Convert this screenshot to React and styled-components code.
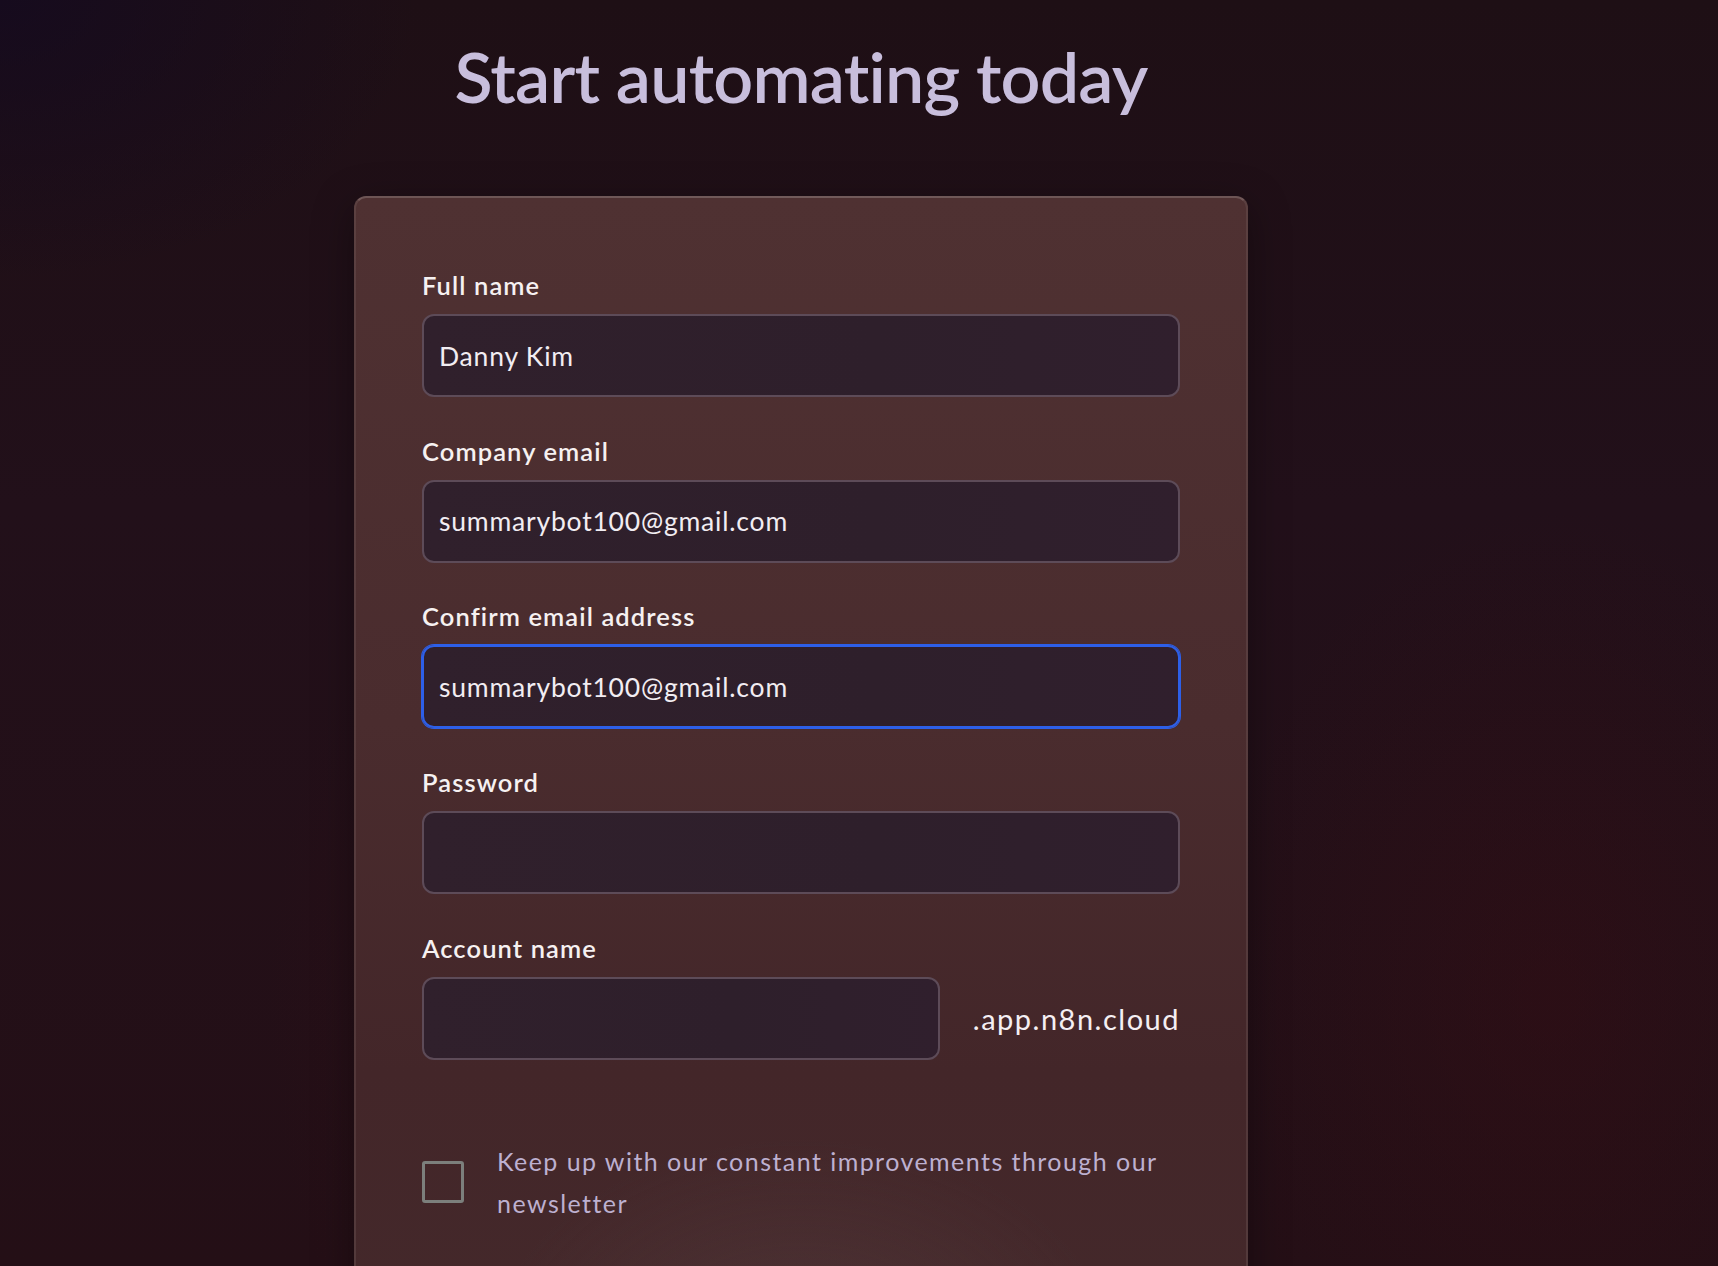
import React from "react";
import styled, { createGlobalStyle } from "styled-components";

const Global = createGlobalStyle`
  html, body { margin: 0; padding: 0; height: 100%; overflow: hidden; }
  body {
    font-family: Lato, "Open Sans", sans-serif;
    background: #1d0f15;
  }
  #root { height: 100%; }
`;

const Page = styled.div`
  min-height: 1266px;
  height: 100%;
  box-sizing: border-box;
  padding-right: 116px;
  display: flex;
  flex-direction: column;
  align-items: center;
  background:
    radial-gradient(ellipse 700px 900px at 760px 1000px, rgba(60, 18, 24, 0.55), rgba(60, 18, 24, 0) 70%),
    radial-gradient(ellipse 500px 700px at 1550px 1000px, rgba(52, 14, 20, 0.5), rgba(52, 14, 20, 0) 70%),
    radial-gradient(ellipse 600px 400px at 0px 0px, rgba(20, 10, 32, 0.8), rgba(20, 10, 32, 0) 70%),
    linear-gradient(180deg, #1e0f15 0%, #22101a 40%, #240f16 100%);
`;

const Title = styled.h1`
  margin: 26px 0 0;
  font-family: Lato, sans-serif;
  font-weight: 600;
  font-size: 70px;
  line-height: 100px;
  letter-spacing: -0.8px;
  color: #c8bedc;
`;

const Card = styled.div`
  margin-top: 70px;
  width: 894px;
  box-sizing: border-box;
  padding: 72px 66px 140px;
  border-radius: 12px;
  border: 2px solid rgba(120, 100, 100, 0.3);
  border-top-color: rgba(150, 130, 128, 0.5);
  background:
    radial-gradient(ellipse 420px 300px at 50% 100%, rgba(90, 66, 68, 0.45), rgba(90, 66, 68, 0) 75%),
    linear-gradient(180deg, #4f3132 0%, #4a2c2e 45%, #432629 75%, #44292b 100%);
  box-shadow: 0 10px 40px rgba(0, 0, 0, 0.35);
  display: flex;
  flex-direction: column;
`;

const Field = styled.div`
  display: flex;
  flex-direction: column;
  margin-bottom: 38.7px;
`;

const Label = styled.label`
  font-family: Lato, sans-serif;
  font-size: 25.5px;
  line-height: 30px;
  font-weight: 600;
  color: #f6f1f1;
  margin-bottom: 14px;
  letter-spacing: 1.1px;
`;

const Input = styled.input`
  box-sizing: border-box;
  width: 100%;
  height: 83px;
  padding: 0 15px;
  border-radius: 12px;
  border: 2px solid ${(p) => (p.$focused ? "#2d5fe8" : "#5d4b58")};
  box-shadow: ${(p) => (p.$focused ? "0 0 0 1px #2d5fe8" : "none")};
  background: linear-gradient(90deg, #30202c 0%, #2e1f2b 60%, #301f2d 100%);
  color: #f2edf2;
  font-family: Lato, sans-serif;
  font-size: 26.5px;
  letter-spacing: 0.8px;
  outline: none;
`;

const AccountRow = styled.div`
  display: flex;
  align-items: center;
  justify-content: space-between;
`;

const AccountInput = styled(Input)`
  width: 518px;
`;

const Suffix = styled.span`
  font-family: Lato, sans-serif;
  font-size: 29px;
  color: #f4eff3;
  letter-spacing: 1.5px;
`;

const CheckRow = styled.div`
  display: flex;
  align-items: center;
  gap: 33px;
  margin-top: 42px;
`;

const Box = styled.span`
  flex: none;
  width: 42px;
  height: 42px;
  box-sizing: border-box;
  border: 3px solid #7c7f7c;
  border-radius: 3px;
`;

const CheckText = styled.span`
  font-family: Lato, sans-serif;
  font-size: 25px;
  line-height: 42px;
  color: #bdb0d0;
  letter-spacing: 1.45px;
`;

export default function App() {
  return (
    <>
      <Global />
      <Page>
        <Title>Start automating today</Title>
        <Card>
          <Field>
            <Label>Full name</Label>
            <Input defaultValue="Danny Kim" />
          </Field>
          <Field>
            <Label>Company email</Label>
            <Input defaultValue="summarybot100@gmail.com" />
          </Field>
          <Field>
            <Label>Confirm email address</Label>
            <Input $focused defaultValue="summarybot100@gmail.com" />
          </Field>
          <Field>
            <Label>Password</Label>
            <Input type="password" />
          </Field>
          <Field>
            <Label>Account name</Label>
            <AccountRow>
              <AccountInput />
              <Suffix>.app.n8n.cloud</Suffix>
            </AccountRow>
          </Field>
          <CheckRow>
            <Box />
            <CheckText>
              Keep up with our constant improvements through our newsletter
            </CheckText>
          </CheckRow>
        </Card>
      </Page>
    </>
  );
}
